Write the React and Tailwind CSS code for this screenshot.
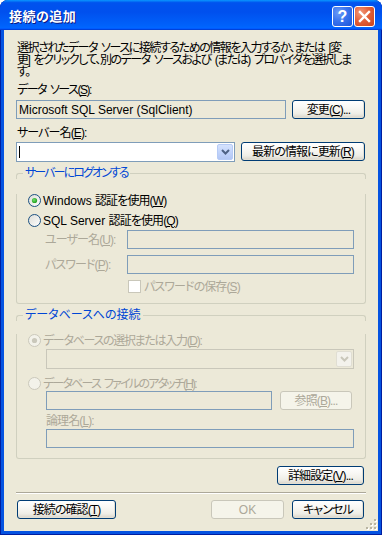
import React from 'react';

const FONT = "font-['Liberation_Sans','Noto_Sans_CJK_JP',sans-serif]";

function Btn({ children, className = '', disabled }) {
  return (
    <div
      className={`h-[19px] flex items-center justify-center rounded-[3px] border whitespace-nowrap ${
        disabled
          ? 'border-[#C9C7BA] bg-[#F5F4EA] text-[#ACA899]'
          : 'border-[#003C74] bg-[linear-gradient(180deg,#FFFFFF_0%,#F8F7F3_40%,#EEEDE6_75%,#D8D3C8_100%)] text-black shadow-[inset_-1px_-1px_0_#E3DFD3]'
      } ${className}`}
    >
      {children}
    </div>
  );
}

function Radio({ checked, disabled, id }) {
  return (
    <svg width="13" height="13" viewBox="0 0 13 13" className="shrink-0">
      <defs>
        <linearGradient id={id + 'f'} x1="0" y1="0" x2="1" y2="1">
          <stop offset="0" stopColor="#DCDBD5" />
          <stop offset="1" stopColor="#FFFFFF" />
        </linearGradient>
        <radialGradient id={id + 'd'} cx="0.4" cy="0.4" r="0.65">
          <stop offset="0" stopColor="#6FE06B" />
          <stop offset="1" stopColor="#1F9A1B" />
        </radialGradient>
      </defs>
      <circle
        cx="6.5"
        cy="6.5"
        r="6"
        fill={disabled ? '#F3F2EA' : `url(#${id}f)`}
        stroke={disabled ? '#CAC8BB' : '#1C5180'}
        strokeWidth="1"
      />
      {checked && (
        <circle cx="6.5" cy="6.5" r="2.6" fill={disabled ? '#CAC8BB' : `url(#${id}d)`} />
      )}
    </svg>
  );
}

function Chevron({ color }) {
  return (
    <svg width="9" height="6" viewBox="0 0 9 6">
      <path d="M1 1 L4.5 4.5 L8 1" fill="none" stroke={color} strokeWidth="2" />
    </svg>
  );
}

function GroupHeader({ title, className = '' }) {
  return (
    <div className="flex items-end h-[12px]">
      <div className="w-[7px] h-[6px] border-l border-t border-[#D0D0BF] rounded-tl-[3px]" />
      <span className={`px-[2px] text-[#0046D5] leading-[12px] whitespace-nowrap ${className}`}>{title}</span>
      <div className="flex-1 h-[6px] border-r border-t border-[#D0D0BF] rounded-tr-[3px]" />
    </div>
  );
}

const L = ({ children }) => <span className="tracking-normal">{children}</span>;
const Sp = () => <span className="inline-block w-[4px]" />;

export default function App() {
  return (
    <div
      className={`w-[382px] h-[535px] flex flex-col rounded-t-[8px] bg-[#0553E1] shadow-[inset_1px_0_#001EA0,inset_-1px_0_#001EA0,inset_0_-1px_#001EA0] ${FONT} [font-feature-settings:'palt']`}
    >
      {/* Title bar */}
      <div className="h-[30px] shrink-0 rounded-t-[8px] bg-[linear-gradient(180deg,#0997FF_0%,#0053EE_9%,#0050EE_40%,#0062FB_85%,#0066FF_92%,#005BFF_95%,#0046DD_97%,#003DD7_100%)] flex items-center pl-[9px] pr-[7px] pt-[3px]">
        <span className="flex-1 text-white font-bold text-[13px] leading-[14px] tracking-[0.5px] [text-shadow:1px_1px_0_#0A1883]">
          接続の追加
        </span>
        <div className="flex gap-[1px]">
          <div className="w-[21px] h-[21px] rounded-[3px] border border-white bg-[radial-gradient(circle_at_30%_30%,#6C9CF7_0%,#3A74EE_45%,#1C54D8_100%)] flex items-center justify-center text-white font-bold text-[16px] leading-[16px] font-['Liberation_Sans',sans-serif]">
            ?
          </div>
          <div className="w-[21px] h-[21px] rounded-[3px] border border-white bg-[radial-gradient(circle_at_30%_30%,#F29A7C_0%,#E2603A_45%,#C8431C_100%)] flex items-center justify-center">
            <svg width="13" height="13" viewBox="0 0 13 13">
              <path d="M2 2 L11 11 M11 2 L2 11" stroke="#FFFFFF" strokeWidth="2.4" strokeLinecap="square" />
            </svg>
          </div>
        </div>
      </div>

      {/* Client area */}
      <div className="flex-1 mx-[4px] mb-[4px] bg-[#ECE9D8] relative flex flex-col px-[12px] pt-[12px] text-[12px] leading-[12px] tracking-[-0.9px] text-black">
        <div className="pl-[1px] whitespace-nowrap tracking-[-1.45px]">
          選択されたデータ<Sp />ソースに接続するための情報を入力するか、または<Sp />[変
          <br />
          更]<Sp />をクリックして、別のデータ<Sp />ソースおよび<Sp />(または)<Sp />プロバイダを選択しま
          <br />
          す。
        </div>

        <div className="mt-[6px] pl-[1px] tracking-[-1.5px] whitespace-nowrap">
          データ<Sp />ソース(<u>S</u>):
        </div>
        <div className="mt-[4px] flex items-center gap-[6px] pr-[1px]">
          <div className="flex-1 h-[19px] border border-[#7F9DB9] bg-[#ECE9D8] flex items-center pl-[2px] whitespace-nowrap">
            <L>Microsoft SQL Server (SqlClient)</L>
          </div>
          <Btn className="w-[73px]">
            変更(<u>C</u>)...
          </Btn>
        </div>

        <div className="mt-[8px] pl-[1px]">
          サーバー名(<u>E</u>):
        </div>
        <div className="mt-[3px] flex items-start gap-[6px] pr-[1px]">
          <div className="w-[219px] h-[20px] border border-[#7F9DB9] bg-white p-[1px] flex">
            <div className="flex-1 flex items-center pl-[1px]">
              <div className="w-[1px] h-[12px] bg-black" />
            </div>
            <div className="w-[16px] h-full rounded-[2px] border border-[#B6CBF6] bg-[linear-gradient(180deg,#D6E3FD_0%,#C2D4FB_50%,#B3C7F5_100%)] flex items-center justify-center">
              <Chevron color="#4D6185" />
            </div>
          </div>
          <Btn className="flex-1">
            最新の情報に更新(<u>R</u>)
          </Btn>
        </div>

        {/* Group 1 */}
        <div className="mt-[5px]">
          <GroupHeader title="サーバーにログオンする" className="tracking-[-1.9px]" />
          <div className="border-x border-b border-[#D0D0BF] rounded-b-[3px] px-[11px] pb-[10px]">
            <div className="mt-[15px] h-[13px] flex items-center gap-[2px] whitespace-nowrap">
              <Radio checked id="ra" />
              <span>
                <L>Windows </L>認証を使用(<u>W</u>)
              </span>
            </div>
            <div className="mt-[7px] h-[13px] flex items-center gap-[2px] whitespace-nowrap">
              <Radio id="rb" />
              <span>
                <L>SQL Server </L>認証を使用(<u>Q</u>)
              </span>
            </div>
            <div className="mt-[3px] flex items-center">
              <span className="w-[99px] pl-[17px] text-[#ACA899] whitespace-nowrap">
                ユーザー名(<u>U</u>):
              </span>
              <div className="flex-1 h-[19px] border border-[#7F9DB9] bg-[#ECE9D8]" />
            </div>
            <div className="mt-[6px] flex items-center">
              <span className="w-[99px] pl-[17px] text-[#ACA899] whitespace-nowrap">
                パスワード(<u>P</u>):
              </span>
              <div className="flex-1 h-[19px] border border-[#7F9DB9] bg-[#ECE9D8]" />
            </div>
            <div className="mt-[6px] h-[13px] flex items-center gap-[3px] pl-[100px] whitespace-nowrap">
              <div className="w-[13px] h-[13px] border border-[#C9C7BA] bg-white shrink-0" />
              <span className="text-[#ACA899]">
                パスワードの保存(<u>S</u>)
              </span>
            </div>
          </div>
        </div>

        {/* Group 2 */}
        <div className="mt-[5px]">
          <GroupHeader title="データベースへの接続" className="tracking-[0px]" />
          <div className="border-x border-b border-[#D0D0BF] rounded-b-[3px] px-[11px] pb-[10px]">
            <div className="mt-[13px] h-[13px] flex items-center gap-[2px] whitespace-nowrap text-[#ACA899]">
              <Radio checked disabled id="rc" />
              <span className="tracking-[-1.3px]">
                データベースの選択または入力(<u>D</u>):
              </span>
            </div>
            <div className="mt-[2px] ml-[18px] h-[20px] border border-[#C9C7BA] bg-[#ECE9D8] p-[1px] flex">
              <div className="flex-1" />
              <div className="w-[16px] h-full rounded-[2px] border border-[#E0DED3] bg-[#F3F2EC] flex items-center justify-center">
                <Chevron color="#C9C7BA" />
              </div>
            </div>
            <div className="mt-[8px] h-[13px] flex items-center gap-[2px] whitespace-nowrap text-[#ACA899]">
              <Radio disabled id="rd" />
              <span className="tracking-[-1.8px]">
                データベース<Sp />ファイルのアタッチ(<u>H</u>):
              </span>
            </div>
            <div className="mt-[1px] ml-[18px] mr-[2px] flex items-center gap-[8px]">
              <div className="flex-1 h-[19px] border border-[#7F9DB9] bg-[#ECE9D8]" />
              <Btn disabled className="w-[72px]">
                参照(<u>B</u>)...
              </Btn>
            </div>
            <div className="mt-[5px] ml-[18px] text-[#ACA899]">
              論理名(<u>L</u>):
            </div>
            <div className="mt-[2px] ml-[18px] h-[19px] border border-[#7F9DB9] bg-[#ECE9D8]" />
          </div>
        </div>

        <div className="mt-[7px] flex justify-end pr-[2px]">
          <Btn className="w-[87px]">
            詳細設定(<u>V</u>)...
          </Btn>
        </div>

        <div className="mt-[7px] h-[2px] border-t border-b border-t-[#ACA899] border-b-white" />

        <div className="mt-[6px] flex items-center pl-[1px] pr-[2px]">
          <Btn className="w-[99px]">
            接続の確認(<u>T</u>)
          </Btn>
          <div className="flex-1" />
          <Btn disabled className="w-[73px]">
            <L>OK</L>
          </Btn>
          <Btn className="w-[72px] ml-[8px]">キャンセル</Btn>
        </div>

        {/* Resize grip */}
        <svg width="12" height="12" viewBox="0 0 12 12" className="absolute right-[1px] bottom-[1px]">
          {[
            [9, 1],
            [5, 5],
            [9, 5],
            [1, 9],
            [5, 9],
            [9, 9],
          ].map(([x, y], i) => (
            <g key={i}>
              <rect x={x + 1} y={y + 1} width="2" height="2" fill="#FFFFFF" />
              <rect x={x} y={y} width="2" height="2" fill="#B8B4A2" />
            </g>
          ))}
        </svg>
      </div>
    </div>
  );
}
